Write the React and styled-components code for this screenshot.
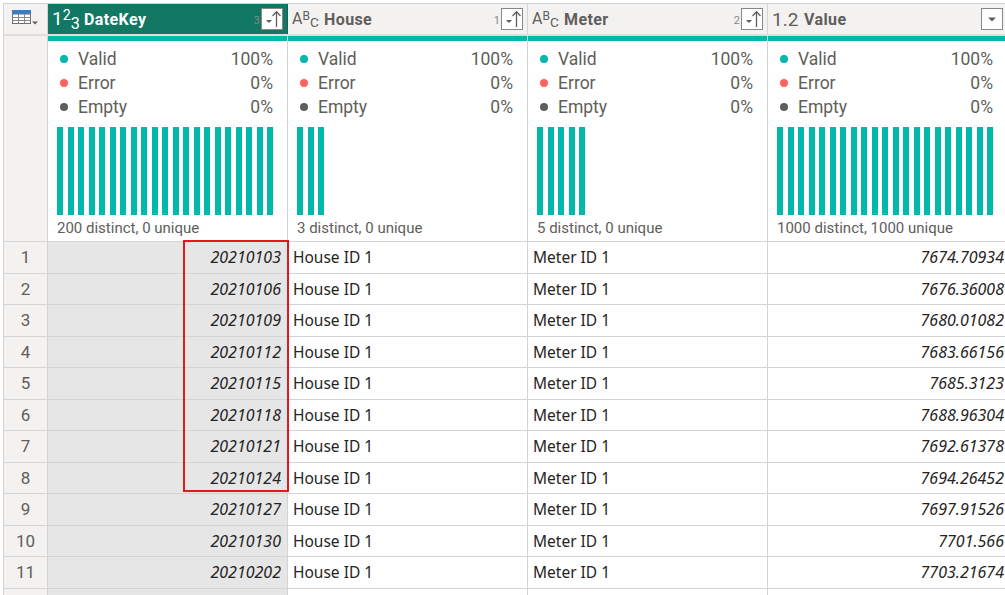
import React from "react";
import styled, { createGlobalStyle } from "styled-components";

const GlobalStyle = createGlobalStyle`
  html, body {
    margin: 0;
    padding: 0;
    background: #ffffff;
    overflow: hidden;
  }
`;

const columns = [
  { key: "date", name: "DateKey", type: "int", order: "3", selected: true, bars: 21, footer: "200 distinct, 0 unique" },
  { key: "house", name: "House", type: "text", order: "1", bars: 3, footer: "3 distinct, 0 unique" },
  { key: "meter", name: "Meter", type: "text", order: "2", bars: 5, footer: "5 distinct, 0 unique" },
  { key: "value", name: "Value", type: "dec", bars: 21, footer: "1000 distinct, 1000 unique" },
];

const rows = [
  ["20210103", "7674.70934"],
  ["20210106", "7676.36008"],
  ["20210109", "7680.01082"],
  ["20210112", "7683.66156"],
  ["20210115", "7685.3123"],
  ["20210118", "7688.96304"],
  ["20210121", "7692.61378"],
  ["20210124", "7694.26452"],
  ["20210127", "7697.91526"],
  ["20210130", "7701.566"],
  ["20210202", "7703.21674"],
  ["", ""],
];

const stats = [
  { label: "Valid", value: "100%", color: "#01b8aa" },
  { label: "Error", value: "0%", color: "#fd625e" },
  { label: "Empty", value: "0%", color: "#605e5c" },
];

const TableIcon = () => (
  <svg width="26" height="18" viewBox="0 0 26 18">
    <rect x="0.5" y="0.5" width="18" height="13" fill="#fff" stroke="#6e6e6e" />
    <rect x="0.5" y="0.5" width="18" height="3.5" fill="#3c7ac2" stroke="#3c7ac2" />
    <line x1="0.5" y1="7.5" x2="18.5" y2="7.5" stroke="#8a8886" />
    <line x1="0.5" y1="10.5" x2="18.5" y2="10.5" stroke="#8a8886" />
    <line x1="6.5" y1="4" x2="6.5" y2="13.5" stroke="#8a8886" />
    <line x1="12.5" y1="4" x2="12.5" y2="13.5" stroke="#8a8886" />
    <path d="M20 11.5 L26 11.5 L23 14.5 Z" fill="#605e5c" />
  </svg>
);

const SortIcon = () => (
  <svg width="20" height="20" viewBox="0 0 20 20">
    <path d="M4 11 L10 11 L7 14 Z" fill="#605e5c" />
    <line x1="14.5" y1="3" x2="14.5" y2="18" stroke="#605e5c" strokeWidth="1.3" />
    <path d="M10.5 7 L14.5 2.8 L18.5 7" fill="none" stroke="#605e5c" strokeWidth="1.3" />
  </svg>
);

const DropIcon = () => (
  <svg width="20" height="20" viewBox="0 0 20 20">
    <path d="M6 8.5 L14 8.5 L10 12.5 Z" fill="#605e5c" />
  </svg>
);

const TypeIcon = ({ type, light }) => {
  if (type === "int")
    return (
      <TypeGlyph $light={light}>
        1<Sup>2</Sup>
        <Sub>3</Sub>
      </TypeGlyph>
    );
  if (type === "text")
    return (
      <TypeGlyph $light={light} $small>
        A<Sup>B</Sup>
        <Sub>C</Sub>
      </TypeGlyph>
    );
  return <TypeGlyph $light={light}>1.2</TypeGlyph>;
};

const App = () => {
  return (
    <>
      <GlobalStyle />
      <Page>
        <Table>
          <HeaderRow>
            <Corner>
              <TableIcon />
            </Corner>
            {columns.map((c) => (
              <HeaderCell key={c.key} $selected={c.selected}>
                <TypeIcon type={c.type} light={c.selected} />
                <ColName $selected={c.selected}>{c.name}</ColName>
                <Order>{c.order}</Order>
                <MenuButton>{c.order ? <SortIcon /> : <DropIcon />}</MenuButton>
              </HeaderCell>
            ))}
          </HeaderRow>

          <QualityRow>
            <QualityCorner />
            {columns.map((c) => (
              <QualityStrip key={c.key} />
            ))}
          </QualityRow>

          <ProfileRow>
            <RowNumCell />
            {columns.map((c) => (
              <Profile key={c.key}>
                {stats.map((s) => (
                  <Stat key={s.label}>
                    <Dot $color={s.color} />
                    <StatLabel>{s.label}</StatLabel>
                    <StatValue>{s.value}</StatValue>
                  </Stat>
                ))}
                <Bars>
                  {Array.from({ length: c.bars }).map((_, i) => (
                    <Bar key={i} />
                  ))}
                </Bars>
                <Footer>{c.footer}</Footer>
              </Profile>
            ))}
          </ProfileRow>

          <Body>
            {rows.map((r, i) => (
              <DataRow key={i}>
                <RowNumCell>{r[0] ? i + 1 : ""}</RowNumCell>
                <Cell $align="right" $selected>
                  {r[0]}
                </Cell>
                <Cell>{r[0] ? "House ID 1" : ""}</Cell>
                <Cell>{r[0] ? "Meter ID 1" : ""}</Cell>
                <Cell $align="right" $tight>
                  {r[1]}
                </Cell>
              </DataRow>
            ))}
            <Selection />
          </Body>
        </Table>
      </Page>
    </>
  );
};

const Page = styled.div`
  width: 1005px;
  height: 595px;
  padding: 3px 0 0 3px;
  box-sizing: border-box;
  overflow: hidden;
  background: #ffffff;
`;

const Table = styled.div`
  border-top: 1px solid #d4d4d4;
  border-left: 1px solid #d4d4d4;
  width: 1010px;
`;

const grid = `
  display: grid;
  grid-template-columns: 44px 240px 240px 240px 240px;
`;

const HeaderRow = styled.div`
  ${grid};
  height: 30px;
  background: #f3f2f1;
  border-bottom: 2px solid #e1dfdd;
`;

const Corner = styled.div`
  display: flex;
  align-items: center;
  justify-content: center;
  padding-right: 2px;
  border-right: 1px solid #d4d4d4;
`;

const HeaderCell = styled.div`
  display: flex;
  align-items: center;
  padding: 0 4px;
  box-sizing: border-box;
  background: ${(p) => (p.$selected ? "#127763" : "#f3f2f1")};
  border-right: 1px solid ${(p) => (p.$selected ? "#0f6654" : "#d4d4d4")};
  font-family: Roboto, "Noto Sans", sans-serif;
`;

const TypeGlyph = styled.span`
  display: inline-flex;
  align-items: baseline;
  color: ${(p) => (p.$light ? "#ffffff" : "#605e5c")};
  font-size: ${(p) => (p.$small ? "16px" : "19px")};
  font-family: Roboto, "Noto Sans", sans-serif;
  width: 28px;
  margin-right: 4px;
  line-height: 1;
`;

const Sup = styled.span`
  font-size: 0.75em;
  position: relative;
  top: -0.35em;
`;

const Sub = styled.span`
  font-size: 0.85em;
  position: relative;
  top: 0.2em;
`;

const ColName = styled.span`
  flex: 1;
  font-weight: 700;
  font-size: 16px;
  letter-spacing: 0.4px;
  color: ${(p) => (p.$selected ? "#ffffff" : "#605e5c")};
`;

const Order = styled.span`
  font-size: 11px;
  color: #8a8886;
  margin-right: 1px;
  margin-top: 2px;
`;

const MenuButton = styled.div`
  width: 22px;
  height: 22px;
  box-sizing: border-box;
  border: 1px solid #8a8886;
  background: #ffffff;
  display: flex;
  align-items: center;
  justify-content: center;
`;

const QualityRow = styled.div`
  ${grid};
  height: 5px;
`;

const QualityCorner = styled.div`
  background: #f3f2f1;
  border-right: 1px solid #d4d4d4;
`;

const QualityStrip = styled.div`
  background: #01b8aa;
  border-right: 1px solid #d4d4d4;
`;

const ProfileRow = styled.div`
  ${grid};
  height: 201px;
  border-bottom: 1px solid #d4d4d4;
  box-sizing: border-box;
`;

const RowNumCell = styled.div`
  background: #f3f2f1;
  border-right: 1px solid #d4d4d4;
  display: flex;
  align-items: center;
  justify-content: center;
  font-family: Roboto, "Noto Sans", sans-serif;
  font-size: 17px;
  color: #605e5c;
`;

const Profile = styled.div`
  border-right: 1px solid #d4d4d4;
  padding: 6px 14px 0 9px;
  font-family: Roboto, "Noto Sans", sans-serif;
  color: #605e5c;
`;

const Stat = styled.div`
  display: flex;
  align-items: center;
  height: 24px;
  font-size: 17.5px;
`;

const Dot = styled.span`
  width: 8px;
  height: 8px;
  border-radius: 50%;
  background: ${(p) => p.$color};
  margin: 0 10px 0 3px;
`;

const StatLabel = styled.span`
  flex: 1;
`;

const StatValue = styled.span``;

const Bars = styled.div`
  display: flex;
  gap: 4.5px;
  height: 88px;
  margin-top: 8px;
`;

const Bar = styled.div`
  width: 6px;
  background: #01b8aa;
`;

const Footer = styled.div`
  margin-top: 1px;
  height: 24px;
  line-height: 24px;
  font-size: 15px;
`;

const Body = styled.div`
  position: relative;
`;

const DataRow = styled.div`
  ${grid};
  height: 31.5px;
  border-bottom: 1px solid #d4d4d4;
  box-sizing: border-box;
`;

const Cell = styled.div`
  display: flex;
  align-items: center;
  justify-content: ${(p) => (p.$align === "right" ? "flex-end" : "flex-start")};
  padding: ${(p) => (p.$align === "right" ? (p.$tight ? "0 3px 0 0" : "0 6px 0 0") : "0 0 0 5px")};
  background: ${(p) => (p.$selected ? "#e6e6e6" : "#ffffff")};
  border-right: 1px solid #d4d4d4;
  font-family: "Noto Sans", "Open Sans", sans-serif;
  font-size: ${(p) => (p.$align === "right" ? "16px" : "15.5px")};
  font-style: ${(p) => (p.$align === "right" ? "italic" : "normal")};
  color: #252423;
`;

const Selection = styled.div`
  position: absolute;
  left: 179px;
  top: -2px;
  width: 106px;
  height: 252px;
  box-sizing: border-box;
  border: 2px solid #e0191f;
  pointer-events: none;
`;

export default App;
